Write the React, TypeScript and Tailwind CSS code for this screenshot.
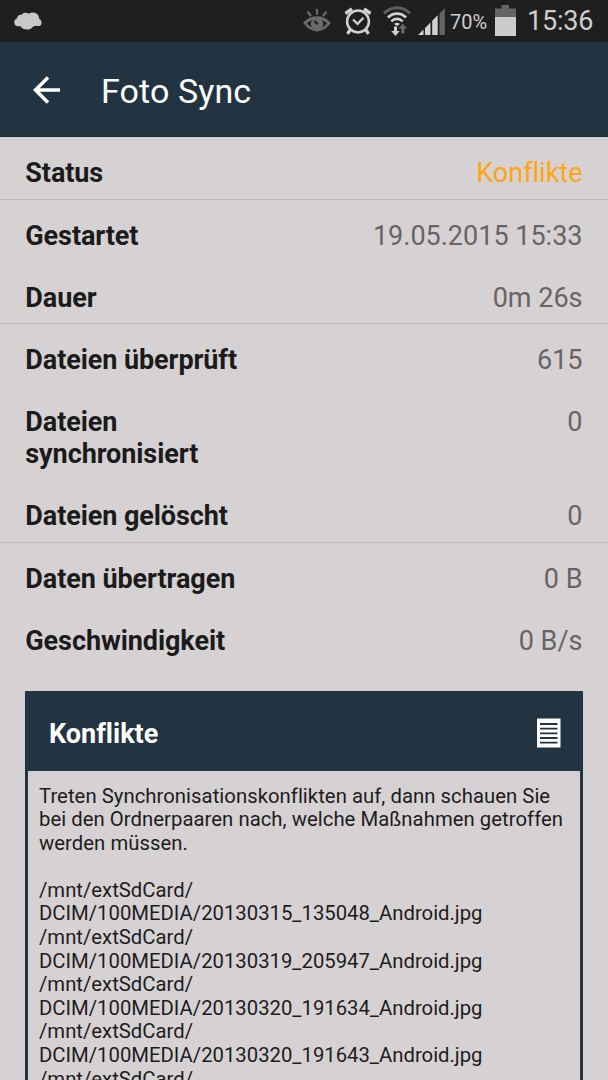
import { clsx } from "clsx";

interface DetailRow {
  label: string;
  value: string;
  highlight?: boolean;
  divider?: boolean;
}

const ROWS: DetailRow[] = [
  { label: "Status", value: "Konflikte", highlight: true, divider: true },
  { label: "Gestartet", value: "19.05.2015 15:33" },
  { label: "Dauer", value: "0m 26s", divider: true },
  { label: "Dateien überprüft", value: "615" },
  { label: "Dateien synchronisiert", value: "0" },
  { label: "Dateien gelöscht", value: "0", divider: true },
  { label: "Daten übertragen", value: "0 B" },
  { label: "Geschwindigkeit", value: "0 B/s" },
];

const CONFLICT_FILES = [
  "20130315_135048_Android.jpg",
  "20130319_205947_Android.jpg",
  "20130320_191634_Android.jpg",
  "20130320_191643_Android.jpg",
];

const CloudIcon = () => (
  <svg viewBox="0 0 28 18" className="h-[18px] w-7" fill="#c9c7c9">
    <path d="M6 14C2.500 15 .3 13 .3 10.500C.3 8.200 1.300 7 3 6.600C3.200 4 5 2.300 7.500 2.700C9.500.3 13 .2 14.800 1.700C17 .1 20.500.1 22.300 1.600C24.500 2.800 25 4.500 25 6.500C27 8 27.800 9.500 27.500 11.500C27 14 25 14.500 22 13.800C20.500 14 19.500 14.300 18.500 15.200C17 17.200 14.800 17.600 13 17.500C10 17.500 8 16.500 6 14Z" />
  </svg>
);

const EyeIcon = () => (
  <svg viewBox="0 0 28 24" className="h-6 w-7" fill="none" stroke="#6b6a6a">
    <path d="M4.500 2.500L8 7M14 0V5.500M23.500 2.500L20 7" strokeWidth="2.200" />
    <path d="M2 14C6 9.800 9 8.800 14 8.800s8 1 12 5.200C22 19.500 18 21 14 21S6 19.500 2 14Z" strokeWidth="2.900" />
    <circle cx="14" cy="14.800" r="6.300" fill="#6b6a6a" stroke="none" />
    <path d="M11.300 11.800L14.700 15.200" stroke="#1f1f1f" strokeWidth="2.200" />
  </svg>
);

const AlarmIcon = () => (
  <svg viewBox="0 0 28 28" className="size-7" fill="none" stroke="#d2d0d1">
    <circle cx="14" cy="14.500" r="10.900" strokeWidth="2.500" />
    <path d="M1.500 6.500L8 1.800M20 1.800L26.500 6.500" strokeWidth="3.400" />
    <path d="M6 23L3.500 26.800M22 23L24.500 26.800" strokeWidth="3.200" />
    <path d="M9 12.500L13.500 16.800L19.500 10.800" strokeWidth="2.300" />
  </svg>
);

const WifiIcon = () => (
  <svg viewBox="0 0 28 30" className="h-[30px] w-7" fill="none">
    <path d="M1 7.500C8.500-.2 19.500-.2 27 7.500" stroke="#5f5e5e" strokeWidth="3.200" />
    <path d="M5 11.500C10 6.300 18 6.300 23 11.500" stroke="#d2d0d1" strokeWidth="2.900" />
    <path d="M8.300 15.300C11.500 12.100 16.500 12.100 19.700 15.300" stroke="#d2d0d1" strokeWidth="2.600" />
    <path d="M11 18Q14 15.500 17 18L14 20Z" fill="#d2d0d1" />
    <path d="M11 20.500h3v4.500h2.700L12.500 30L8.200 25H11Z" fill="#d2d0d1" />
    <path d="M18.300 27.500V22.500H15.500L19.700 17.500L24 22.500h-2.700v5Z" fill="#6b6a6a" />
  </svg>
);

const SignalIcon = () => (
  <svg viewBox="0 0 27 27" className="size-[27px]" fill="#d2d0d1">
    <path d="M0 27L5.500 21.500V27Z" />
    <path d="M7 20L12.500 14.500V27H7Z" />
    <path d="M14.200 12.800L19.700 7.300V27H14.200Z" />
    <path d="M21.500 5.500L26.800.2V27H21.500Z" fill="#666565" />
  </svg>
);

const BatteryIcon = () => (
  <svg viewBox="0 0 21 31" className="h-[31px] w-[21px]">
    <path d="M6.500 0H14V3.500H21V12H0V3.500H6.500Z" fill="#666565" />
    <path d="M0 12H21V31H0Z" fill="#cdcbcc" />
  </svg>
);

const BackIcon = () => (
  <svg viewBox="0 0 28 28" className="size-7" fill="none" stroke="#fff" strokeWidth="3.500">
    <path d="M27 14H3M15 1.500L2.500 14L15 26.500" />
  </svg>
);

const LogIcon = () => (
  <svg viewBox="0 0 24 30" className="h-[30px] w-6">
    <path d="M0 .5H23.500V29.500H0Z" fill="#fff" />
    <path d="M3 6H20.500M3 10.700H20.500M3 15.300H20.500M3 20H20.500M3 24.700H20.500" stroke="#223441" strokeWidth="1.800" />
  </svg>
);

function StatusBar() {
  return (
    <div className="flex h-[42px] shrink-0 items-center bg-[#1f1f1f] pl-3.5 text-[#cfcdce]">
      <CloudIcon />
      <div className="ml-auto flex items-center pr-[15px]">
        <EyeIcon />
        <div className="ml-[13px]"><AlarmIcon /></div>
        <div className="ml-[11px]"><WifiIcon /></div>
        <div className="ml-[7px]"><SignalIcon /></div>
        <span className="ml-[5px] w-[38px] pt-px text-[20px] whitespace-nowrap">70%</span>
        <div className="ml-[7px] pb-0.5"><BatteryIcon /></div>
        <span className="ml-[11px] w-[66px] text-[27px] tracking-[-0.2px] whitespace-nowrap">15:36</span>
      </div>
    </div>
  );
}

function Row({ label, value, highlight, divider }: DetailRow) {
  return (
    <div className={clsx("flex justify-between pt-5 pr-[25.5px] pl-[25.3px] text-[27px] leading-8", divider ? "border-b border-[#bdb9bb] pb-[9.5px]" : "pb-2.5")}>
      <span className="w-[230px] font-bold tracking-[-0.08px] text-[#1b1b1b]">{label}</span>
      <span className={clsx("whitespace-nowrap", highlight ? "text-[#ffa514]" : "text-[#666566]")}>{value}</span>
    </div>
  );
}

export default function App() {
  return (
    <div className="flex h-[1080px] w-[608px] flex-col overflow-hidden bg-[#d6d2d3] font-['Roboto','Noto_Sans',sans-serif] [font-variant-ligatures:none]">
      <StatusBar />

      <header className="flex h-[95px] shrink-0 items-center border-b border-[#1b2a35] bg-[#223441] pt-px pl-[33px] text-white">
        <BackIcon />
        <h1 className="ml-10 pt-0.5 text-[34px] leading-10 tracking-[0.1px]">Foto Sync</h1>
      </header>

      <main className="shrink-0">
        {ROWS.map((row) => (
          <Row key={row.label} {...row} />
        ))}

        {/* Conflict log */}
        <section className="mt-6 mr-[25px] ml-[25px] border-x-[3px] border-[#223441]">
          <div className="flex h-20 items-center justify-between bg-[#223441] pr-[19px] pl-[21px]">
            <h2 className="pt-1.5 text-[27px] leading-8 font-bold text-white">Konflikte</h2>
            <div className="pt-1"><LogIcon /></div>
          </div>
          <div className="pt-3.5 pr-2.5 pl-[11px] text-[20.3px] leading-[23.6px] text-[#1d1c1d]">
            <p className="tracking-[0.04px]">
              Treten Synchronisationskonflikten auf, dann schauen Sie
              <br />
              bei den Ordnerpaaren nach, welche Maßnahmen getroffen
              <br />
              werden müssen.
            </p>
            <div className="mt-[23.6px]">
              {CONFLICT_FILES.map((file) => (
                <p key={file}>
                  /mnt/extSdCard/
                  <br />
                  DCIM/100MEDIA/{file}
                </p>
              ))}
              <p>/mnt/extSdCard/</p>
            </div>
          </div>
        </section>
      </main>
    </div>
  );
}
